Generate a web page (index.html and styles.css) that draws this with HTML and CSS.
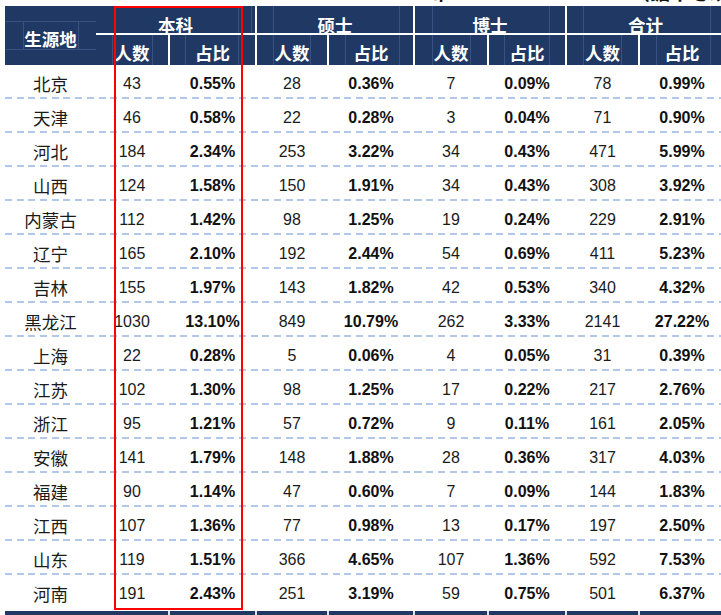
FILE: index.html
```html
<!DOCTYPE html>
<html lang="zh-CN">
<head>
<meta charset="utf-8">
<title>生源地统计</title>
<link rel="stylesheet" href="styles.css">
</head>
<body>
<div class="title"><div class="tline"><span class="t1">布</span><span class="t2">（据中心统计）</span></div></div>
<div class="sheet">
  <div class="head">
    <div class="corner">生源地</div>
    <div class="hc grp g1">本科</div>
    <div class="hc grp g2 sep">硕士</div>
    <div class="hc grp g3 sep">博士</div>
    <div class="hc grp g4 sep">合计</div>
    <div class="hc sub s1">人数</div>
    <div class="hc sub s2 sep">占比</div>
    <div class="hc sub s3 sep">人数</div>
    <div class="hc sub s4 sep">占比</div>
    <div class="hc sub s5 sep">人数</div>
    <div class="hc sub s6 sep">占比</div>
    <div class="hc sub s7 sep">人数</div>
    <div class="hc sub s8 sep">占比</div>
  </div>

  <div class="row"><div class="cell name">北京</div><div class="cell num">43</div><div class="cell pct sep">0.55%</div><div class="cell num sep">28</div><div class="cell pct sep">0.36%</div><div class="cell num sep">7</div><div class="cell pct sep">0.09%</div><div class="cell num sep">78</div><div class="cell pct sep">0.99%</div></div>
  <div class="row"><div class="cell name">天津</div><div class="cell num">46</div><div class="cell pct sep">0.58%</div><div class="cell num sep">22</div><div class="cell pct sep">0.28%</div><div class="cell num sep">3</div><div class="cell pct sep">0.04%</div><div class="cell num sep">71</div><div class="cell pct sep">0.90%</div></div>
  <div class="row"><div class="cell name">河北</div><div class="cell num">184</div><div class="cell pct sep">2.34%</div><div class="cell num sep">253</div><div class="cell pct sep">3.22%</div><div class="cell num sep">34</div><div class="cell pct sep">0.43%</div><div class="cell num sep">471</div><div class="cell pct sep">5.99%</div></div>
  <div class="row"><div class="cell name">山西</div><div class="cell num">124</div><div class="cell pct sep">1.58%</div><div class="cell num sep">150</div><div class="cell pct sep">1.91%</div><div class="cell num sep">34</div><div class="cell pct sep">0.43%</div><div class="cell num sep">308</div><div class="cell pct sep">3.92%</div></div>
  <div class="row"><div class="cell name">内蒙古</div><div class="cell num">112</div><div class="cell pct sep">1.42%</div><div class="cell num sep">98</div><div class="cell pct sep">1.25%</div><div class="cell num sep">19</div><div class="cell pct sep">0.24%</div><div class="cell num sep">229</div><div class="cell pct sep">2.91%</div></div>
  <div class="row"><div class="cell name">辽宁</div><div class="cell num">165</div><div class="cell pct sep">2.10%</div><div class="cell num sep">192</div><div class="cell pct sep">2.44%</div><div class="cell num sep">54</div><div class="cell pct sep">0.69%</div><div class="cell num sep">411</div><div class="cell pct sep">5.23%</div></div>
  <div class="row"><div class="cell name">吉林</div><div class="cell num">155</div><div class="cell pct sep">1.97%</div><div class="cell num sep">143</div><div class="cell pct sep">1.82%</div><div class="cell num sep">42</div><div class="cell pct sep">0.53%</div><div class="cell num sep">340</div><div class="cell pct sep">4.32%</div></div>
  <div class="row"><div class="cell name">黑龙江</div><div class="cell num">1030</div><div class="cell pct sep">13.10%</div><div class="cell num sep">849</div><div class="cell pct sep">10.79%</div><div class="cell num sep">262</div><div class="cell pct sep">3.33%</div><div class="cell num sep">2141</div><div class="cell pct sep">27.22%</div></div>
  <div class="row"><div class="cell name">上海</div><div class="cell num">22</div><div class="cell pct sep">0.28%</div><div class="cell num sep">5</div><div class="cell pct sep">0.06%</div><div class="cell num sep">4</div><div class="cell pct sep">0.05%</div><div class="cell num sep">31</div><div class="cell pct sep">0.39%</div></div>
  <div class="row"><div class="cell name">江苏</div><div class="cell num">102</div><div class="cell pct sep">1.30%</div><div class="cell num sep">98</div><div class="cell pct sep">1.25%</div><div class="cell num sep">17</div><div class="cell pct sep">0.22%</div><div class="cell num sep">217</div><div class="cell pct sep">2.76%</div></div>
  <div class="row"><div class="cell name">浙江</div><div class="cell num">95</div><div class="cell pct sep">1.21%</div><div class="cell num sep">57</div><div class="cell pct sep">0.72%</div><div class="cell num sep">9</div><div class="cell pct sep">0.11%</div><div class="cell num sep">161</div><div class="cell pct sep">2.05%</div></div>
  <div class="row"><div class="cell name">安徽</div><div class="cell num">141</div><div class="cell pct sep">1.79%</div><div class="cell num sep">148</div><div class="cell pct sep">1.88%</div><div class="cell num sep">28</div><div class="cell pct sep">0.36%</div><div class="cell num sep">317</div><div class="cell pct sep">4.03%</div></div>
  <div class="row"><div class="cell name">福建</div><div class="cell num">90</div><div class="cell pct sep">1.14%</div><div class="cell num sep">47</div><div class="cell pct sep">0.60%</div><div class="cell num sep">7</div><div class="cell pct sep">0.09%</div><div class="cell num sep">144</div><div class="cell pct sep">1.83%</div></div>
  <div class="row"><div class="cell name">江西</div><div class="cell num">107</div><div class="cell pct sep">1.36%</div><div class="cell num sep">77</div><div class="cell pct sep">0.98%</div><div class="cell num sep">13</div><div class="cell pct sep">0.17%</div><div class="cell num sep">197</div><div class="cell pct sep">2.50%</div></div>
  <div class="row"><div class="cell name">山东</div><div class="cell num">119</div><div class="cell pct sep">1.51%</div><div class="cell num sep">366</div><div class="cell pct sep">4.65%</div><div class="cell num sep">107</div><div class="cell pct sep">1.36%</div><div class="cell num sep">592</div><div class="cell pct sep">7.53%</div></div>
  <div class="row last"><div class="cell name">河南</div><div class="cell num">191</div><div class="cell pct sep">2.43%</div><div class="cell num sep">251</div><div class="cell pct sep">3.19%</div><div class="cell num sep">59</div><div class="cell pct sep">0.75%</div><div class="cell num sep">501</div><div class="cell pct sep">6.37%</div></div>

  <div class="foot"><div></div><div></div><div class="sep"></div><div class="sep"></div><div class="sep"></div><div class="sep"></div><div class="sep"></div><div class="sep"></div><div class="sep"></div></div>

  <div class="mark"></div>
</div>
</body>
</html>
```

FILE: styles.css
```css
html, body {
  margin: 0;
  padding: 0;
  overflow: hidden;
  background: #fff;
}

body {
  width: 721px;
  height: 615px;
  font-family: "Noto Sans CJK SC", "Liberation Sans", sans-serif;
  --navy: #1f3864;
  --fl: #3a5283;
}

.title {
  height: 6px;
  overflow: hidden;
}

.tline {
  display: flex;
  margin-top: -18px;
  font: 700 20px/20px "Noto Sans CJK SC", sans-serif;
  color: #111;
  white-space: nowrap;
}

.t1 { margin-left: 430px; }
.t2 { margin-left: 180px; }

.sheet {
  position: relative;
  margin-left: 5px;
  width: 719px;
}

.head, .row, .foot {
  display: grid;
  grid-template-columns: 91px 72px 87px 72px 86px 74px 78px 73px 86px;
}

/* ---------- header ---------- */
.head {
  grid-template-rows: 27px 32px;
  background: var(--navy);
  color: #fff;
  font-weight: 700;
  font-size: 17.5px;
  line-height: 18px;
}

.head > div {
  display: flex;
  align-items: center;
  justify-content: center;
  white-space: nowrap;
}

.corner {
  grid-row: 1 / span 2;
  padding-top: 7px;
  background:
    linear-gradient(var(--fl), var(--fl)) 0 15px / 100% 1px no-repeat,
    linear-gradient(var(--fl), var(--fl)) 0 43px / 100% 1px no-repeat,
    linear-gradient(var(--fl), var(--fl)) 18px 15px / 1px 28px no-repeat,
    linear-gradient(var(--fl), var(--fl)) 73px 15px / 1px 28px no-repeat;
}

.hc {
  background-image:
    linear-gradient(var(--fl), var(--fl)),
    linear-gradient(var(--fl), var(--fl));
  background-repeat: no-repeat;
  background-size: 1px 100%;
  background-position: var(--l1, -5px) 0, var(--l2, -5px) 0;
}

.grp {
  grid-column: span 2;
  padding-top: 10px;
}

.sub {
  border-top: 2px solid #fff;
  padding-top: 5px;
}

.head .sep { border-left: 2px solid #fff; }

.g1 { --l1: 142px; --l2: 155px; }
.g2 { --l1: 16px;  --l2: 142px; }
.g3 { --l1: 17px;  --l2: 134px; }
.g4 { --l1: 16px;  --l2: 143px; }

.s1 { --l1: 16px; --l2: 56px; }
.s2 { --l1: 15px; --l2: 68px; }
.s3 { --l1: 16px; --l2: 53px; }
.s4 { --l1: 16px; --l2: 70px; }
.s5 { --l1: 17px; --l2: 55px; }
.s6 { --l1: 15px; --l2: 60px; }
.s7 { --l1: 16px; --l2: 54px; }
.s8 { --l1: 16px; --l2: 70px; }

/* ---------- body rows ---------- */
.row {
  height: 34px;
  color: #1b1b1b;
  background: repeating-linear-gradient(90deg, #b3c7ea 0 7px, transparent 7px 11.7px) left bottom / 100% 2px no-repeat;
}

.row.last { background: none; }

.cell {
  display: flex;
  align-items: center;
  justify-content: center;
  padding-top: 3px;
  white-space: nowrap;
}

.row .sep { border-left: 2px solid transparent; }

.name {
  font-family: "Noto Sans CJK SC", sans-serif;
  font-size: 17.5px;
  line-height: 18px;
}

.num, .pct {
  font-family: "Liberation Sans Narrow", "Arial Narrow", "Liberation Sans", sans-serif;
  font-size: 16px;
  line-height: 18px;
}

.pct {
  font-weight: 700;
  color: #111;
}

/* ---------- next header strip ---------- */
.foot {
  margin-top: 2px;
  height: 10px;
  background: var(--navy);
}

.foot .sep { border-left: 2px solid #dfe5ef; }

/* ---------- red highlight overlay ---------- */
.mark {
  position: absolute;
  left: 109px;
  top: 0;
  width: 129px;
  height: 604px;
  box-sizing: border-box;
  border: 2px solid #f00;
  pointer-events: none;
}
```
